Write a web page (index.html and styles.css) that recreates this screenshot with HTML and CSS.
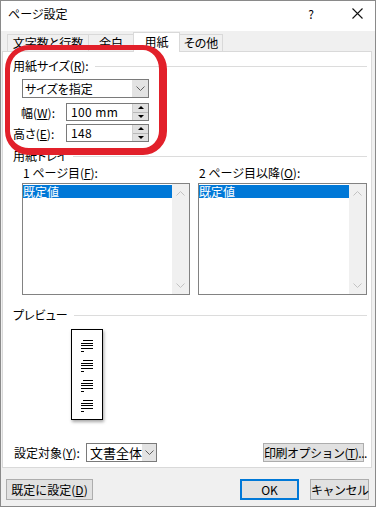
FILE: index.html
```html
<!DOCTYPE html>
<html>
<head>
<meta charset="utf-8">
<link rel="stylesheet" href="styles.css">
</head>
<body>

<div class="dialog">
  <div class="titlebar">
    <span class="title">ページ設定</span>
    <span class="help">?</span>
    <svg class="close" width="11" height="11" viewBox="0 0 11 11"><path d="M0.5 0.5L10.5 10.5M10.5 0.5L0.5 10.5" stroke="#111" stroke-width="1.1" fill="none"/></svg>
  </div>

  <div class="tabs">
    <div class="tab t1">文字数と行数</div>
    <div class="tab t2">余白</div>
    <div class="tab t3 active">用紙</div>
    <div class="tab t4">その他</div>
  </div>

  <div class="panel">
    <div class="group-head">用紙サイズ(<u>R</u>):</div>
    <div class="combo paper">
      <span class="combo-text">サイズを指定</span>
      <span class="combo-btn"><svg width="9" height="5" viewBox="0 0 9 5"><path d="M0.5 0.5L4.5 4.5L8.5 0.5" stroke="#606060" fill="none"/></svg></span>
    </div>
    <div class="field">
      <label class="field-label indent">幅(<u>W</u>):</label>
      <div class="spin">
        <span class="spin-text">100 mm</span>
        <span class="spin-btns"><span class="arrow-up"></span><span class="arrow-down"></span></span>
      </div>
    </div>
    <div class="field second">
      <label class="field-label">高さ(<u>E</u>):</label>
      <div class="spin">
        <span class="spin-text">148</span>
        <span class="spin-btns"><span class="arrow-up"></span><span class="arrow-down"></span></span>
      </div>
    </div>

    <div class="group-head tray-head">用紙トレイ</div>
    <div class="trays">
      <div class="tray first">
        <div class="tray-label">1 ページ目(<u>F</u>):</div>
        <div class="listbox">
          <div class="items"><div class="item sel">既定値</div></div>
          <div class="scroll">
            <svg width="9" height="5" viewBox="0 0 9 5"><path d="M0.5 4.5L4.5 0.5L8.5 4.5" stroke="#c2c2c2" fill="none"/></svg>
            <svg width="9" height="5" viewBox="0 0 9 5"><path d="M0.5 0.5L4.5 4.5L8.5 0.5" stroke="#c2c2c2" fill="none"/></svg>
          </div>
        </div>
      </div>
      <div class="tray">
        <div class="tray-label">2 ページ目以降(<u>O</u>):</div>
        <div class="listbox">
          <div class="items"><div class="item sel">既定値</div></div>
          <div class="scroll">
            <svg width="9" height="5" viewBox="0 0 9 5"><path d="M0.5 4.5L4.5 0.5L8.5 4.5" stroke="#c2c2c2" fill="none"/></svg>
            <svg width="9" height="5" viewBox="0 0 9 5"><path d="M0.5 0.5L4.5 4.5L8.5 0.5" stroke="#c2c2c2" fill="none"/></svg>
          </div>
        </div>
      </div>
    </div>

    <div class="group-head preview-head">プレビュー</div>
    <div class="page">
      <svg width="30" height="89" viewBox="0 0 30 89">
        <g fill="#000">
          <g>
            <rect x="11" y="10" width="10" height="1"/>
            <rect x="9" y="13" width="12" height="1"/>
            <rect x="9" y="15" width="12" height="1"/>
            <rect x="9" y="18" width="12" height="1"/>
            <rect x="9" y="21" width="3" height="1"/>
          </g>
          <g transform="translate(0 20)">
            <rect x="11" y="10" width="10" height="1"/>
            <rect x="9" y="13" width="12" height="1"/>
            <rect x="9" y="15" width="12" height="1"/>
            <rect x="9" y="18" width="12" height="1"/>
            <rect x="9" y="21" width="3" height="1"/>
          </g>
          <g transform="translate(0 40)">
            <rect x="11" y="10" width="10" height="1"/>
            <rect x="9" y="13" width="12" height="1"/>
            <rect x="9" y="15" width="12" height="1"/>
            <rect x="9" y="18" width="12" height="1"/>
            <rect x="9" y="21" width="3" height="1"/>
          </g>
          <g transform="translate(0 60)">
            <rect x="11" y="10" width="10" height="1"/>
            <rect x="9" y="13" width="12" height="1"/>
            <rect x="9" y="15" width="12" height="1"/>
            <rect x="9" y="18" width="12" height="1"/>
            <rect x="9" y="21" width="3" height="1"/>
          </g>
        </g>
      </svg>
    </div>

    <div class="apply-row">
      <span class="apply-label">設定対象(<u>Y</u>):</span>
      <div class="combo target">
        <span class="combo-text">文書全体</span>
        <span class="combo-btn"><svg width="9" height="5" viewBox="0 0 9 5"><path d="M0.5 0.5L4.5 4.5L8.5 0.5" stroke="#606060" fill="none"/></svg></span>
      </div>
      <button class="btn print">印刷オプション(<u>T</u>)...</button>
    </div>
  </div>

  <div class="footer">
    <button class="btn default">既定に設定(<u>D</u>)</button>
    <button class="btn ok">OK</button>
    <button class="btn cancel">キャンセル</button>
  </div>

  <div class="highlight"></div>
</div>

</body>
</html>
```

FILE: styles.css
```css
body {
  margin: 0;
  background: #fff;
  font-family: "Noto Sans CJK JP", sans-serif;
  font-size: 12px;
  color: #000;
  font-feature-settings: "palt";
}

u {
  text-decoration: underline;
  text-underline-offset: 1px;
}

.dialog {
  position: relative;
  width: 376px;
  height: 507px;
  box-sizing: border-box;
  border: 1px solid #8a8a8a;
  background: #f0f0f0;
  display: flex;
  flex-direction: column;
}

/* title bar */
.titlebar {
  height: 30px;
  box-sizing: border-box;
  background: #fff;
  display: flex;
  align-items: center;
  padding: 0 12px 5px 7px;
}

.title {
  flex: 1;
}

.help {
  margin-right: 38px;
}

.close {
  display: block;
}

/* tabs */
.tabs {
  height: 20px;
  display: flex;
  align-items: flex-end;
  padding-left: 6px;
}

.tab {
  box-sizing: border-box;
  height: 17px;
  line-height: 15px;
  border: 1px solid #d9d9d9;
  border-bottom: 0;
  border-right: 0;
  background: #f0f0f0;
  text-align: center;
  white-space: nowrap;
}

.tab.active {
  position: relative;
  z-index: 1;
  height: 20px;
  margin-bottom: -1px;
  line-height: 17px;
  background: #fff;
  border-right: 1px solid #d9d9d9;
}

.t1 { width: 81px; }
.t2 { width: 45px; }
.t3 { width: 47px; }
.t4 { width: 43px; border-left: 0; border-right: 1px solid #d9d9d9; }

/* panel */
.panel {
  height: 417px;
  box-sizing: border-box;
  margin: 0 3px 0 1px;
  background: #fff;
  border: 1px solid #d9d9d9;
  padding: 7px 4px 0 10px;
  display: flex;
  flex-direction: column;
}

.group-head {
  display: flex;
  align-items: center;
  height: 14px;
  line-height: 14px;
  white-space: nowrap;
}

.group-head::after {
  content: "";
  flex: 1;
  height: 1px;
  background: #dcdcdc;
  margin-left: 6px;
}

.combo {
  display: flex;
  box-sizing: border-box;
  height: 19px;
  border: 1px solid #7a7a7a;
  background: #fff;
}

.combo-text {
  flex: 1;
  line-height: 17px;
  padding-left: 2px;
  white-space: nowrap;
}

.combo-btn {
  width: 16px;
  background: #e3e3e3;
  display: flex;
  align-items: center;
  justify-content: center;
}

.combo.paper {
  width: 127px;
  margin: 6px 0 0 9px;
}

.field {
  display: flex;
  align-items: center;
  height: 18px;
  margin-top: 5px;
}

.field.second {
  margin-top: 3px;
}

.field-label {
  width: 53px;
  box-sizing: border-box;
}

.field-label.indent {
  padding-left: 8px;
}

.spin {
  display: flex;
  width: 83px;
  height: 18px;
  box-sizing: border-box;
  border: 1px solid #7a7a7a;
}

.spin-text {
  flex: 1;
  line-height: 16px;
  padding-left: 4px;
  letter-spacing: 0.4px;
}

.spin-btns {
  width: 15px;
  display: flex;
  flex-direction: column;
  background: #e1e1e1;
  border-left: 1px solid #d0d0d0;
}

.arrow-up,
.arrow-down {
  flex: 1;
  display: flex;
  align-items: center;
  justify-content: center;
}

.arrow-up {
  border-bottom: 1px solid #b8b8b8;
}

.arrow-up::after {
  content: "";
  border-left: 3px solid transparent;
  border-right: 3px solid transparent;
  border-bottom: 3px solid #000;
}

.arrow-down::after {
  content: "";
  border-left: 3px solid transparent;
  border-right: 3px solid transparent;
  border-top: 3px solid #000;
}

/* paper trays */
.tray-head {
  margin-top: 7px;
}

.trays {
  display: flex;
  gap: 8px;
  margin-top: 3px;
  padding-left: 9px;
}

.tray {
  width: 169px;
}

.tray.first {
  width: 168px;
}

.tray-label {
  height: 14px;
  line-height: 14px;
  margin-left: 1px;
  white-space: nowrap;
}

.listbox {
  display: flex;
  height: 112px;
  margin-top: 3px;
  box-sizing: border-box;
  border: 1px solid #828282;
  background: #fff;
}

.items {
  flex: 1;
  padding-top: 1px;
}

.item {
  height: 13px;
  line-height: 13px;
  white-space: nowrap;
}

.item.sel {
  background: #0078d7;
  color: #fff;
}

.scroll {
  width: 17px;
  box-sizing: border-box;
  background: #f0f0f0;
  display: flex;
  flex-direction: column;
  align-items: center;
  justify-content: space-between;
  padding: 7px 0 6px;
}

.scroll svg {
  display: block;
}

/* preview */
.preview-head {
  margin-top: 13px;
}

.page {
  width: 32px;
  height: 91px;
  box-sizing: border-box;
  margin: 7px 0 0 58px;
  border: 1px solid #000;
  background: #fff;
  box-shadow: 1px 2px 3px rgba(0, 0, 0, 0.35);
}

.page svg {
  display: block;
}

/* apply row */
.apply-row {
  display: flex;
  align-items: center;
  height: 19px;
  margin-top: 23px;
}

.apply-label {
  width: 73px;
  padding-left: 1px;
  box-sizing: border-box;
  white-space: nowrap;
}

.combo.target {
  width: 71px;
}

.combo.target .combo-text {
  font-size: 13px;
  padding-left: 3px;
}

.btn {
  box-sizing: border-box;
  height: 21px;
  padding: 0;
  border: 1px solid #adadad;
  background: #e1e1e1;
  font-family: inherit;
  font-size: 12px;
  color: #000;
  white-space: nowrap;
}

.btn.print {
  width: 101px;
  height: 19px;
  margin-left: auto;
  margin-right: 3px;
  letter-spacing: -0.5px;
}

/* footer */
.footer {
  flex: 1;
  display: flex;
  align-items: flex-start;
  padding: 11px 6px 0 5px;
}

.btn.default {
  width: 87px;
}

.btn.ok {
  width: 59px;
  margin-left: auto;
  border: 2px solid #0078d7;
}

.btn.cancel {
  width: 59px;
  margin-left: 11px;
  letter-spacing: -0.5px;
}

/* red marker drawn over the paper size group */
.highlight {
  position: absolute;
  left: 4px;
  top: 44px;
  width: 162px;
  height: 110px;
  box-sizing: border-box;
  border-style: solid;
  border-color: #e2202a;
  border-width: 5px 8px 7px 5px;
  border-radius: 24px;
  pointer-events: none;
  z-index: 2;
}
```
